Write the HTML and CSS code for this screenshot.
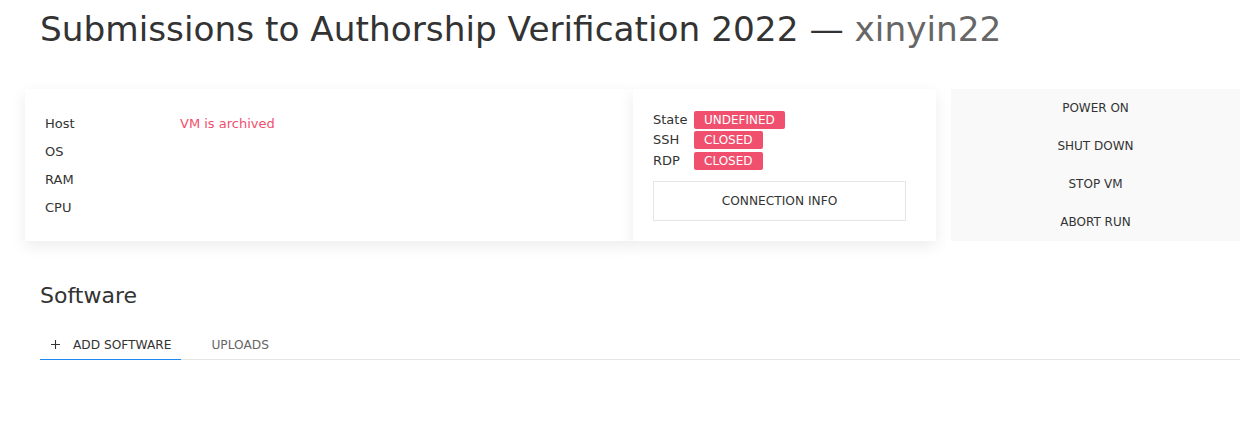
FILE: index.html
```html
<!DOCTYPE html>
<html><head>
  <meta charset="UTF-8">
  <title>Submissions to Authorship Verification 2022</title>
  <link rel="stylesheet" href="styles.css">
</head>
<body>
  <div class="page">
    <h1 class="title">Submissions to Authorship Verification 2022 <span class="dash">—</span> <span class="user">xinyin22</span></h1>

    <div class="vm-grid">
      <div class="card card-info">
        <table class="info">
          <tr><td class="key">Host</td><td class="val danger">VM is archived</td></tr>
          <tr><td class="key">OS</td><td class="val"></td></tr>
          <tr><td class="key">RAM</td><td class="val"></td></tr>
          <tr><td class="key">CPU</td><td class="val"></td></tr>
        </table>
      </div>

      <div class="card card-state">
        <div class="state-row"><span class="state-key">State</span><span class="badge">UNDEFINED</span></div>
        <div class="state-row"><span class="state-key">SSH</span><span class="badge">CLOSED</span></div>
        <div class="state-row"><span class="state-key">RDP</span><span class="badge">CLOSED</span></div>
        <a href="#" class="btn-outline">CONNECTION INFO</a>
      </div>

      <div class="card-muted">
        <a href="#" class="btn-text">POWER ON</a>
        <a href="#" class="btn-text">SHUT DOWN</a>
        <a href="#" class="btn-text">STOP VM</a>
        <a href="#" class="btn-text">ABORT RUN</a>
      </div>
    </div>

    <h2 class="section">Software</h2>

    <ul class="tabs">
      <li class="active"><a href="#"><svg class="plus" width="9" height="9" viewBox="0 0 9 9"><path d="M4.5 0v9M0 4.5h9" stroke="#333" stroke-width="1.1" fill="none"/></svg>ADD SOFTWARE</a></li>
      <li><a href="#">UPLOADS</a></li>
    </ul>
  </div>
</body></html>
```

FILE: styles.css
```css
body {
  margin: 0;
  background: #fff;
  color: #333;
  font-family: "DejaVu Sans", Verdana, sans-serif;
  font-size: 13px;
}

a {
  color: #333;
  text-decoration: none;
}

.page {
  padding: 0 17px 0 40px;
}

.title {
  margin: 9px 0 0;
  font-size: 34.3px;
  font-weight: normal;
  line-height: 41px;
  color: #333;
}

.title .user {
  color: #666;
}

.vm-grid {
  display: grid;
  grid-template-columns: 608px 303px 1fr;
  margin: 39px 0 0 -15px;
}

.card {
  background: #fff;
  box-shadow: 0 5px 15px rgba(0, 0, 0, 0.08);
  position: relative;
}

.card-info {
  padding: 21px 20px 19px;
}

.info {
  border-collapse: collapse;
}

.info td {
  padding: 0;
  height: 28px;
  line-height: 28px;
}

.info .key {
  width: 135px;
}

.danger {
  color: #f0506e;
}

.card-state {
  padding: 21px 30px 20px 20px;
}

.state-row {
  display: flex;
  align-items: center;
  height: 20px;
  line-height: 20px;
}

.state-row:last-of-type {
  margin-top: 1px;
}

.state-key {
  width: 41px;
}

.badge {
  display: inline-block;
  background: #f0506e;
  color: #fff;
  font-size: 12px;
  line-height: 18px;
  padding: 0 10px;
  border-radius: 2px;
}

.btn-outline {
  display: block;
  margin-top: 10px;
  height: 38px;
  line-height: 38px;
  border: 1px solid #e5e5e5;
  text-align: center;
  font-size: 12.2px;
}

.card-muted {
  margin-left: 15px;
  background: #f9f9f9;
  display: flex;
  flex-direction: column;
}

.btn-text {
  flex: 1;
  display: flex;
  align-items: center;
  justify-content: center;
  font-size: 12px;
}

.section {
  margin: 41px 0 0;
  font-size: 22px;
  font-weight: normal;
  line-height: 1.3;
}

.tabs {
  list-style: none;
  margin: 19px 0 0;
  padding: 0;
  display: flex;
  border-bottom: 1px solid #e5e5e5;
}

.tabs li {
  margin-right: 20px;
}

.tabs a {
  display: flex;
  align-items: center;
  padding: 5px 10px 4px 10px;
  line-height: 20px;
  font-size: 12.2px;
  color: #666;
  margin-bottom: -1px;
  border-bottom: 1px solid transparent;
}

.tabs .active a {
  color: #333;
  border-bottom-color: #1e87f0;
}

.plus {
  margin: 0 13px 0 1px;
}
```
